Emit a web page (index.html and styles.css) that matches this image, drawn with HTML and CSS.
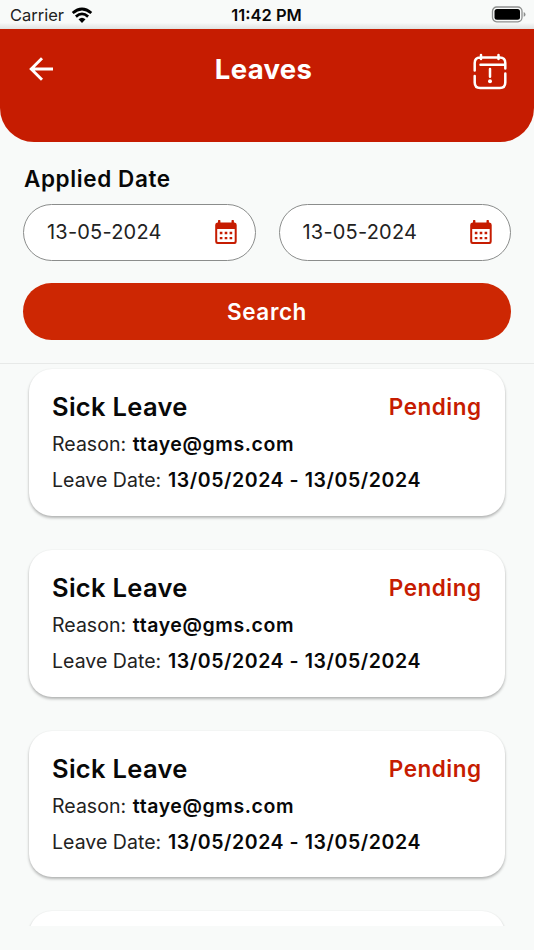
FILE: index.html
```html
<!DOCTYPE html>
<html lang="en">
<head>
<meta charset="utf-8">
<meta name="viewport" content="width=device-width, initial-scale=1">
<title>Leaves</title>
<link rel="stylesheet" href="styles.css">
</head>
<body>
<svg class="defs" width="0" height="0" aria-hidden="true">
  <symbol id="calendar" viewBox="0 0 24 26">
    <path fill="#c61c01" fill-rule="evenodd" d="M4 1.700Q4 1 4.700 1h1Q6.400 1 6.400 1.700V3.500H17.500V1.700Q17.500 1 18.200 1h1Q19.900 1 19.900 1.700V3.500H20.500Q22.700 3.500 22.700 6V22.500Q22.700 25 20.500 25H3.500Q1.200 25 1.200 22.500V6Q1.200 3.500 3.500 3.500H4ZM3.200 10V22.300Q3.200 23.100 4 23.100H19.900Q20.700 23.100 20.700 22.300V10Z"/>
    <path fill="#c61c01" d="M5.800 12.800h2.600v2.400H5.800zM10.700 12.800h2.600v2.400h-2.600zM15.600 12.800h2.600v2.400h-2.600zM5.800 17.900h2.600v2.400H5.800zM10.700 17.900h2.600v2.400h-2.600zM15.600 17.900h2.600v2.400h-2.600z"/>
  </symbol>
</svg>
<div class="screen">
  <div class="status">
    <div class="carrier"><span>Carrier</span>
      <svg width="22" height="17" viewBox="0 0 22 17" fill="none" stroke="#000" stroke-width="2.800"><path d="M1.700 6Q11-2 20.300 6M4.900 9.600Q11 4.200 17.100 9.600"/><path d="M7.500 12.300Q11 9.300 14.500 12.300L11 16Z" fill="#000" stroke="none"/></svg>
    </div>
    <div class="time">11:42 PM</div>
    <svg class="battery" width="35" height="17" viewBox="0 0 35 17"><rect x="1.500" y="1" width="29.500" height="14.800" rx="4.200" fill="none" stroke="#8d8f8e" stroke-width="1.300"/><rect x="3.500" y="3" width="25.500" height="10.800" rx="2.500"/><path d="M32.700 6q1.800.6 1.800 2.400t-1.800 2.400z" fill="#8d8f8e"/></svg>
  </div>
  <header class="header">
    <svg class="back" width="26" height="26" viewBox="0 0 26 26" fill="none" stroke="#fff" stroke-width="2.900"><path d="M25 13H3M14 2.200L3.200 13L14 23.800"/></svg>
    <h1>Leaves</h1>
    <svg class="request" width="36" height="38" viewBox="0 0 36 38" fill="none" stroke="#fff" stroke-width="2.500" stroke-linecap="round"><path d="M2.700 17.500V10Q2.700 4.500 8.200 4.500H27.800Q33.300 4.500 33.300 10V15.500M2.700 23V29.500Q2.700 35 8.200 35H27.800Q33.300 35 33.300 29.500V20.500M9 2V6M26.500 2V6M8.500 11.800H32M18 16V23.800"/><circle cx="18" cy="28.200" r="2" fill="#fff" stroke="none"/></svg>
  </header>
  <section class="filter">
    <h2>Applied Date</h2>
    <div class="dates">
      <div class="date"><span>13-05-2024</span><svg width="24" height="26"><use href="#calendar"/></svg></div>
      <div class="date"><span>13-05-2024</span><svg width="24" height="26"><use href="#calendar"/></svg></div>
    </div>
    <button class="search">Search</button>
  </section>
  <main class="list">
    <article class="card">
      <div class="top"><h3>Sick Leave</h3><span class="state">Pending</span></div>
      <p class="reason">Reason: <b>ttaye@gms.com</b></p>
      <p class="period">Leave Date: <b>13/05/2024 - 13/05/2024</b></p>
    </article>
    <article class="card">
      <div class="top"><h3>Sick Leave</h3><span class="state">Pending</span></div>
      <p class="reason">Reason: <b>ttaye@gms.com</b></p>
      <p class="period">Leave Date: <b>13/05/2024 - 13/05/2024</b></p>
    </article>
    <article class="card">
      <div class="top"><h3>Sick Leave</h3><span class="state">Pending</span></div>
      <p class="reason">Reason: <b>ttaye@gms.com</b></p>
      <p class="period">Leave Date: <b>13/05/2024 - 13/05/2024</b></p>
    </article>
    <article class="card"></article>
  </main>
</div>
</body>
</html>
```
FILE: styles.css
```css
* { box-sizing: border-box; margin: 0; padding: 0; }
body { background: #f8faf9; color: #080808; font-family: Inter, "Liberation Sans", sans-serif; }
.defs { display: block; height: 0; }
.screen { width: 534px; height: 950px; display: flex; flex-direction: column; overflow: hidden; }
.status { height: 29px; padding: 0 8px 0 10px; display: grid; grid-template-columns: 1fr auto 1fr; align-items: center; background: linear-gradient(#f8faf9 78%, #e0e2e1); font-size: 16.5px; line-height: 29px; }
.carrier { display: flex; align-items: center; gap: 7px; color: #222; letter-spacing: 0; }
.time { font-weight: 600; padding-top: 1px; margin-right: 3px; letter-spacing: 0; }
.carrier span { padding-top: 1px; }
.battery { justify-self: end; margin-top: -1px; }
.header { height: 113.400px; flex: none; padding: 26px 26px 0 28px; display: flex; justify-content: space-between; align-items: flex-start; background: #c61c01; border-radius: 0 0 34px 34px; color: #fff; }
.back { margin: 1px 0 0; }
.header h1 { font-size: 27.500px; line-height: 28px; font-weight: 700; letter-spacing: .3px; margin: 0 0 0 1px; }
.request { margin-top: -2px; }
.filter { height: 221.600px; flex: none; padding: 21.600px 23px 0; border-bottom: 1.500px solid #e7e9e8; }
.filter h2 { font-size: 22.500px; line-height: 30px; font-weight: 600; letter-spacing: .6px; padding-left: 1px; }
.dates { display: grid; grid-template-columns: 1fr 1fr; gap: 23px; margin-top: 10px; }
.date { height: 57px; padding: 0 17px 0 23px; border: 1.500px solid #8b8d8c; border-radius: 29px; background: #fff; display: flex; justify-content: space-between; align-items: center; font-size: 20px; letter-spacing: .2px; color: #222; }
.search { display: block; width: 100%; height: 57px; margin-top: 22.400px; border: 0; border-radius: 29px; background: #cd2703; color: #fff; font: 600 22.500px Inter, sans-serif; letter-spacing: .6px; }
.list { height: 562px; flex: none; padding: 5px 29px 0; overflow: hidden; }
.card { height: 146.800px; margin-bottom: 34px; padding: 21.500px 23.500px 0 23px; background: #fff; border-radius: 23px; box-shadow: 0 2px 3px rgba(0,0,0,.28), 0 0 2px rgba(0,0,0,.05); }
.top { display: flex; justify-content: space-between; align-items: center; height: 32px; }
.card h3 { font-size: 25.500px; font-weight: 600; letter-spacing: .3px; }
.state { color: #c61c01; font-size: 22.500px; font-weight: 600; letter-spacing: .5px; }
.card p { font-size: 19.500px; line-height: 36px; letter-spacing: .03px; white-space: nowrap; color: #222; }
.reason { margin-top: 3.500px; }
.card b { font-weight: 600; margin-left: 1.200px; letter-spacing: .58px; color: #080808; }
```
